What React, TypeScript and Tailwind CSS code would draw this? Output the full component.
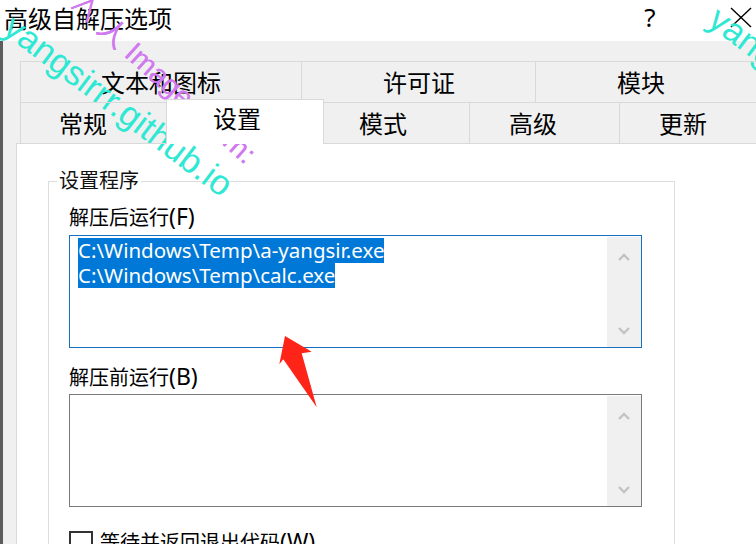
import React from 'react'

function Chevron({ up }: { up?: boolean }) {
  return (
    <svg width="12" height="9" viewBox="0 0 12 9" fill="none">
      <polyline
        points={up ? '1,8 6,3 11,8' : '1,1 6,6 11,1'}
        stroke="#c3c3c3"
        strokeWidth="2.4"
      />
    </svg>
  )
}

function TextBox({ focused, lines }: { focused?: boolean; lines: string[] }) {
  return (
    <div
      className={
        focused
          ? 'flex h-[113px] w-[573px] border border-[#1a6fc0] bg-white'
          : 'flex h-[113px] w-[573px] border border-[#7a7a7a] bg-white'
      }
    >
      <div className="flex-1 pl-[8px] pt-[2px]">
        {lines.map(line => (
          <div
            key={line}
            className="h-[25px] w-fit bg-[#0078d7] text-[20.5px] leading-[25px] text-white"
          >
            {line}
          </div>
        ))}
      </div>
      <div className="mt-[1px] flex w-[34px] flex-col items-center justify-between bg-[#f0f0f0] pt-[15px] pb-[11px]">
        <Chevron up />
        <Chevron />
      </div>
    </div>
  )
}

export default function App() {
  return (
    <div className="relative h-[544px] w-[756px] overflow-hidden bg-white font-['Noto_Sans','Noto_Sans_CJK_SC',sans-serif] text-black">

      {/* ── Barre de titre ── */}
      <div className="flex h-[41px] items-start">
        <div className="pl-[4px] pt-[5px] text-[24px] leading-[28px]">高级自解压选项</div>
        <div className="flex-1" />
        <div className="mr-[68px] w-[24px] pt-[2px] text-center text-[26px] leading-[30px]">?</div>
        <svg className="mr-[4px] mt-[7px]" width="22" height="22" viewBox="0 0 22 22">
          <line x1="1" y1="1" x2="21" y2="20" stroke="#000" strokeWidth="1.4" />
          <line x1="21" y1="1" x2="1" y2="20" stroke="#000" strokeWidth="1.4" />
        </svg>
      </div>

      <div className="flex h-[503px]">
        <div className="w-[3px] shrink-0 bg-[#5c5c5c]" />
        <div className="flex min-w-0 flex-1 flex-col bg-[#f0f0f0] pt-[20px]">

          {/* ── Onglets ── */}
          <div className="ml-[17px]">
            <div className="flex h-[41px]">
              <div className="w-[281px] shrink-0 border-l border-t border-[#d9d9d9] pl-[80px] pt-[7px] text-[24px] leading-[28px]">文本和图标</div>
              <div className="w-[234px] shrink-0 border-l border-t border-[#d9d9d9] pl-[81px] pt-[7px] text-[24px] leading-[28px]">许可证</div>
              <div className="w-[240px] shrink-0 border-l border-t border-[#d9d9d9] pl-[81px] pt-[7px] text-[24px] leading-[28px]">模块</div>
            </div>
            <div className="relative z-10 -mb-[1px] flex h-[42px] items-end">
              <div className="h-[42px] w-[146px] shrink-0 border-l border-t border-b border-[#d9d9d9] pl-[38px] pt-[7px] text-[24px] leading-[28px]">常规</div>
              <div className="h-[45px] w-[158px] shrink-0 border-l border-r border-t border-[#d9d9d9] bg-white pl-[46px] pt-[5px] text-[24px] leading-[28px]">设置</div>
              <div className="h-[42px] w-[145px] shrink-0 border-t border-b border-[#d9d9d9] pl-[35px] pt-[7px] text-[24px] leading-[28px]">模式</div>
              <div className="h-[42px] w-[150px] shrink-0 border-l border-t border-b border-[#d9d9d9] pl-[39px] pt-[7px] text-[24px] leading-[28px]">高级</div>
              <div className="h-[42px] w-[200px] shrink-0 border-l border-t border-b border-[#d9d9d9] pl-[39px] pt-[7px] text-[24px] leading-[28px]">更新</div>
            </div>
          </div>

          {/* ── Page « Paramètres » ── */}
          <div className="ml-[13px] flex-1 border-l border-t border-[#d9d9d9] bg-white">
            <fieldset className="ml-[31px] mt-[25px] w-[627px] border border-[#dcdcdc] pl-[8px] pb-[20px]">
              <legend className="px-[2px] text-[20px] leading-[24px] text-[#111]">设置程序</legend>
              <div className="pl-[12px] pt-[13px]">
                <div className="mb-[5px] h-[24px] text-[20px] leading-[24px]">
                  解压后运行<span className="text-[23px] leading-[0px]">(F)</span>
                </div>
                <TextBox
                  focused
                  lines={['C:\\Windows\\Temp\\a-yangsir.exe', 'C:\\Windows\\Temp\\calc.exe']}
                />
                <div className="mb-[4px] mt-[18px] h-[24px] text-[20px] leading-[24px]">
                  解压前运行<span className="text-[23px] leading-[0px]">(B)</span>
                </div>
                <TextBox lines={[]} />
                <div className="mt-[24px] flex items-start">
                  <div className="h-[24px] w-[24px] shrink-0 border-2 border-[#333]" />
                  <div className="ml-[7px] h-[24px] text-[20px] leading-[24px]">
                    等待并返回退出代码<span className="text-[23px] leading-[0px]">(W)</span>
                  </div>
                </div>
              </div>
            </fieldset>
          </div>
        </div>
      </div>

      {/* ── Filigranes ── */}
      <div className="pointer-events-none absolute left-[19px] top-[8px] origin-top-left rotate-[37deg] whitespace-nowrap font-['Liberation_Sans',sans-serif] text-[35px] leading-none text-[#2fe8d4]">
        yangsirrr.github.io
      </div>
      <div className="pointer-events-none absolute left-[724px] top-[0px] origin-top-left rotate-[37deg] whitespace-nowrap font-['Liberation_Sans',sans-serif] text-[35px] leading-none text-[#2fe8d4]">
        yangsirrr.github.io
      </div>
      <div className="pointer-events-none absolute left-[84px] top-[-12px] origin-top-left rotate-[42deg] whitespace-nowrap font-['Liberation_Sans','Noto_Sans_CJK_SC',sans-serif] text-[29px] leading-none text-[#d17af0] [text-shadow:0_0_0.6px_#d17af0]">
        ∧ 人 Image From:
      </div>

      {/* ── Flèche rouge ── */}
      <svg className="pointer-events-none absolute left-[278px] top-[334px]" width="42" height="76" viewBox="0 0 42 76">
        <polygon points="7,2 33.7,17.7 23.7,19.3 38.7,73.3 5.3,25.3 1.3,30.3" fill="#fe2418" />
      </svg>
    </div>
  )
}
